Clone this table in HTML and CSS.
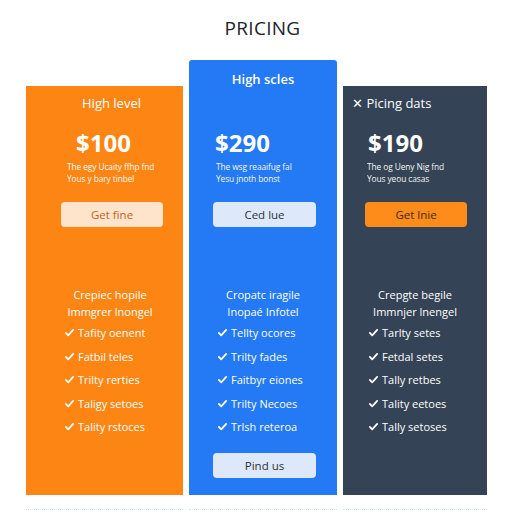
FILE: index.html
```html
<!DOCTYPE html>
<html>
<head>
<meta charset="utf-8">
<link rel="stylesheet" href="styles.css">
</head>
<body>
<div class="page">
  <h1 class="title">PRICING</h1>
  <div class="cards">
    <div class="card orange">
      <div class="head">High level</div>
      <div class="body">
        <div class="price">$100</div>
        <div class="desc"><span>The egy Ucaity ffhp fnd</span><span>Yous y bary tinbel</span></div>
      </div>
      <div class="btn btn-light-o">Get fine</div>
      <div class="feat-title"><span>Crepiec hopile</span><span>Immgrer lnongel</span></div>
      <ul class="list">
        <li><svg viewBox="0 0 12 12"><path d="M2 6.5l2.6 2.6L10 3.2"/></svg>Tafity oenent</li>
        <li><svg viewBox="0 0 12 12"><path d="M2 6.5l2.6 2.6L10 3.2"/></svg>Fatbil teles</li>
        <li><svg viewBox="0 0 12 12"><path d="M2 6.5l2.6 2.6L10 3.2"/></svg>Trilty rerties</li>
        <li><svg viewBox="0 0 12 12"><path d="M2 6.5l2.6 2.6L10 3.2"/></svg>Taligy setoes</li>
        <li><svg viewBox="0 0 12 12"><path d="M2 6.5l2.6 2.6L10 3.2"/></svg>Tality rstoces</li>
      </ul>
    </div>
    <div class="card blue">
      <div class="head">High scles</div>
      <div class="body">
        <div class="price">$290</div>
        <div class="desc"><span>The wsg reaaifug fal</span><span>Yesu jnoth bonst</span></div>
      </div>
      <div class="btn btn-light-b">Ced lue</div>
      <div class="feat-title"><span>Cropatc iragile</span><span>Inopaé Infotel</span></div>
      <ul class="list">
        <li><svg viewBox="0 0 12 12"><path d="M2 6.5l2.6 2.6L10 3.2"/></svg>Tellty ocores</li>
        <li><svg viewBox="0 0 12 12"><path d="M2 6.5l2.6 2.6L10 3.2"/></svg>Trilty fades</li>
        <li><svg viewBox="0 0 12 12"><path d="M2 6.5l2.6 2.6L10 3.2"/></svg>Faitbyr eiones</li>
        <li><svg viewBox="0 0 12 12"><path d="M2 6.5l2.6 2.6L10 3.2"/></svg>Trilty Necoes</li>
        <li><svg viewBox="0 0 12 12"><path d="M2 6.5l2.6 2.6L10 3.2"/></svg>Trlsh reteroa</li>
      </ul>
      <div class="btn btn-light-b bottom">Pind us</div>
    </div>
    <div class="card dark">
      <div class="head">✕ Picing dats</div>
      <div class="body">
        <div class="price">$190</div>
        <div class="desc"><span>The og Ueny Nig fnd</span><span>Yous yeou casas</span></div>
      </div>
      <div class="btn btn-orange">Get lnie</div>
      <div class="feat-title"><span>Crepgte begile</span><span>Immnjer lnengel</span></div>
      <ul class="list">
        <li><svg viewBox="0 0 12 12"><path d="M2 6.5l2.6 2.6L10 3.2"/></svg>Tarlty setes</li>
        <li><svg viewBox="0 0 12 12"><path d="M2 6.5l2.6 2.6L10 3.2"/></svg>Fetdal setes</li>
        <li><svg viewBox="0 0 12 12"><path d="M2 6.5l2.6 2.6L10 3.2"/></svg>Tally retbes</li>
        <li><svg viewBox="0 0 12 12"><path d="M2 6.5l2.6 2.6L10 3.2"/></svg>Tality eetoes</li>
        <li><svg viewBox="0 0 12 12"><path d="M2 6.5l2.6 2.6L10 3.2"/></svg>Tally setoses</li>
      </ul>
    </div>
  </div>
  <div class="footer-lines">
    <span class="fl1"></span><span class="fl2"></span><span class="fl3"></span>
  </div>
</div>
</body>
</html>
```

FILE: styles.css
```css
* { box-sizing: border-box; }
html, body { margin: 0; padding: 0; background: #fff; }
body { font-family: "Open Sans", "Noto Sans", "Liberation Sans", sans-serif; width: 512px; height: 512px; overflow: hidden; }
.page { padding-top: 16px; }
.title {
  margin: 0;
  text-align: center;
  font-size: 19px;
  font-weight: 500;
  line-height: 24px;
  color: #1d222b;
  letter-spacing: 0.3px;
  height: 44px;
  padding-left: 13px;
}
.cards {
  display: flex;
  align-items: flex-end;
  gap: 6px;
  padding-left: 26px;
}
.card {
  height: 409px;
  color: #fff;
  display: flex;
  flex-direction: column;
}
.orange { width: 157px; background: #fd8514; }
.blue { width: 148px; background: #2479f4; height: 435px; border-radius: 3px 3px 0 0; }
.dark { width: 144px; background: #344355; }

.head {
  font-size: 13px;
  line-height: 14px;
  text-align: center;
  padding-top: 10px;
  height: 43px;
}
.orange .head { padding-left: 14px; }
.blue .head { padding-top: 12px; height: 69px; font-weight: 600; }
.dark .head { text-align: left; padding-left: 9px; }

.body { display: flex; flex-direction: column; }
.price {
  font-size: 24px;
  font-weight: 700;
  line-height: 28px;
}
.desc {
  display: flex;
  flex-direction: column;
  font-size: 8.4px;
  line-height: 11.5px;
  margin-top: 4px;
  letter-spacing: -0.1px;
  opacity: 0.95;
}
.orange .price { padding-left: 50px; }
.orange .desc { padding-left: 41px; }
.blue .price { padding-left: 26px; }
.blue .desc { padding-left: 27px; }
.dark .price { padding-left: 25px; }
.dark .desc { padding-left: 24px; }

.btn {
  width: 102px;
  height: 25px;
  border-radius: 4px;
  margin-top: 18px;
  font-size: 11.5px;
  line-height: 25px;
  text-align: center;
}
.orange .btn { margin-left: 35px; }
.blue .btn { margin-left: 24px; width: 103px; }
.dark .btn { margin-left: 22px; }
.btn-light-o { background: #fde4ca; color: #c8621a; }
.btn-light-b { background: #dde9fb; color: #2a3340; }
.btn-orange { background: #fd8c1a; color: #3a2a1c; }

.feat-title {
  display: flex;
  flex-direction: column;
  margin-top: 59px;
  font-size: 11px;
  line-height: 17px;
  text-align: center;
}
.orange .feat-title { padding-left: 11px; }

.list {
  list-style: none;
  margin: 0;
  padding: 1px 0 0 0;
  font-size: 11px;
}
.list li {
  height: 23.5px;
  display: flex;
  align-items: center;
  gap: 3px;
}
.orange .list { padding-left: 38px; }
.blue .list { padding-left: 28px; }
.dark .list { padding-left: 25px; }
.list svg {
  width: 11px;
  height: 11px;
  fill: none;
  stroke: #fff;
  stroke-width: 2;
  stroke-linecap: round;
  stroke-linejoin: round;
}
.btn.bottom { margin-top: 14px; }

.footer-lines {
  display: flex;
  gap: 6px;
  padding-left: 26px;
  margin-top: 14px;
}
.footer-lines span {
  height: 1px;
  border-top: 1px dotted #cfe6ee;
}
.fl1 { width: 157px; }
.fl2 { width: 148px; }
.fl3 { width: 144px; }
```
